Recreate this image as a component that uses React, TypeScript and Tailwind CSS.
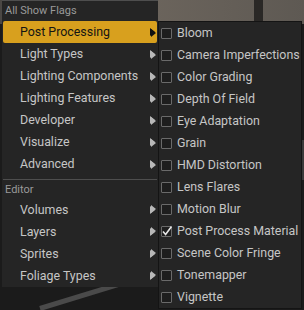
import React from "react";

const Arrow = ({ dark }: { dark?: boolean }) => (
  <svg width="5" height="8" viewBox="0 0 5 8" className="shrink-0">
    <path d="M0 0 L5 4 L0 8 Z" fill={dark ? "#111" : "#b8b8b8"} />
  </svg>
);

const Check = ({ checked }: { checked?: boolean }) => (
  <div className="w-[11px] h-[11px] border border-[#6a6a6a] rounded-[1px] bg-[#1e1e1e] shrink-0 relative">
    {checked && (
      <svg width="12" height="12" viewBox="0 0 12 12" className="absolute left-[-1px] top-[-2px]">
        <path d="M2 6.5 L4.6 9.5 L10.5 1.5" stroke="#e8e8e8" strokeWidth="1.6" fill="none" />
      </svg>
    )}
  </div>
);

const leftTop = [
  "Post Processing",
  "Light Types",
  "Lighting Components",
  "Lighting Features",
  "Developer",
  "Visualize",
  "Advanced",
];
const leftEditor = ["Volumes", "Layers", "Sprites", "Foliage Types"];
const sub = [
  "Bloom",
  "Camera Imperfections",
  "Color Grading",
  "Depth Of Field",
  "Eye Adaptation",
  "Grain",
  "HMD Distortion",
  "Lens Flares",
  "Motion Blur",
  "Post Process Material",
  "Scene Color Fringe",
  "Tonemapper",
  "Vignette",
];
const subArrows = new Set([
  "Bloom",
  "Camera Imperfections",
  "Color Grading",
  "Depth Of Field",
  "Eye Adaptation",
  "Grain",
  "HMD Distortion",
  "Motion Blur",
  "Post Process Material",
  "Scene Color Fringe",
  "Tonemapper",
]);

export default function App() {
  return (
    <div
      className="relative w-[304px] h-[310px] overflow-hidden bg-[#1b1b1b]"
      style={{ fontFamily: "Roboto, 'Noto Sans', sans-serif" }}
    >
      {/* background */}
      <div className="absolute left-0 top-0 w-[304px] h-[24px] bg-gradient-to-r from-[#4a4744] via-[#6b645c] to-[#5e5953]" />
      <div className="absolute left-[254px] top-0 w-[9px] h-[24px] bg-[#2a2826]" />
      <div className="absolute left-[40px] top-[306px] w-[90px] h-[5px] bg-[#4a4a4a] rotate-[-17deg] origin-left" />
      <div className="absolute left-[302px] top-[140px] w-[2px] h-[40px] bg-[#3a3a3a]" />

      {/* left menu */}
      <div className="absolute left-[2px] top-0 w-[156px] h-[287px] bg-[#252525] border-t border-[#4e4e4e] pt-[1px] flex flex-col">
        <div className="h-[19px] pl-[3px] flex items-center text-[11px] text-[#9a9a9a]">All Show Flags</div>
        {leftTop.map((t, i) => (
          <div
            key={t}
            className={
              "h-[22px] mx-[1px] pl-[17px] pr-[2px] flex items-center justify-between text-[12.4px] rounded-[2px] " +
              (i === 0 ? "bg-[#d8a01e] text-[#141414]" : "text-[#c6c6c6]")
            }
          >
            <span>{t}</span>
            <Arrow dark={i === 0} />
          </div>
        ))}
        <div className="mt-[4px] mx-[1px] h-[1px] bg-[#4e4e4e]" />
        <div className="h-[19px] pl-[3px] pt-[2px] flex items-center text-[11px] text-[#9a9a9a]">Editor</div>
        {leftEditor.map((t) => (
          <div
            key={t}
            className="h-[22px] mx-[1px] pl-[17px] pr-[2px] flex items-center justify-between text-[12.4px] text-[#c6c6c6]"
          >
            <span>{t}</span>
            <Arrow />
          </div>
        ))}
      </div>

      {/* submenu */}
      <div className="absolute left-[158px] top-[21px] w-[144px] h-[288px] bg-[#252525] border border-[#141414] flex flex-col">
        {sub.map((t) => (
          <div key={t} className="h-[22px] pl-[2px] flex items-center gap-[5px] text-[12.4px] text-[#c6c6c6]">
            <Check checked={t === "Post Process Material"} />
            <span className="whitespace-nowrap">{t}</span>
          </div>
        ))}
      </div>
      {/* small arrows peeking at left edge of submenu */}
      <div className="absolute left-[151px] top-[22px] flex flex-col">
        {sub.map((t) => (
          <div key={t} className="h-[22px] flex items-center">
            {subArrows.has(t) ? <Arrow dark={t === "Bloom"} /> : <div className="w-[5px]" />}
          </div>
        ))}
      </div>
    </div>
  );
}
